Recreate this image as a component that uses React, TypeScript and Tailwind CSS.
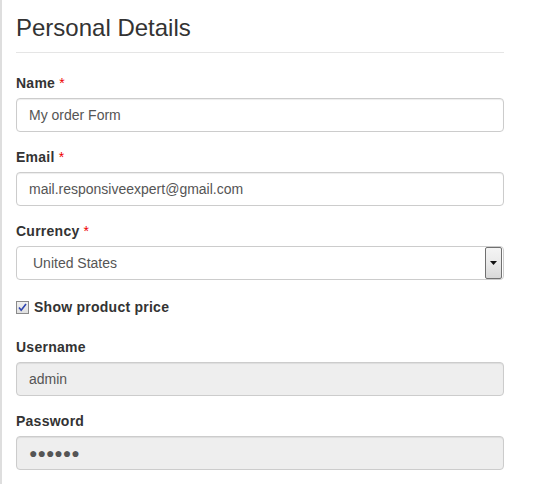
import { ReactNode } from "react";

function Label({ children, required }: { children: ReactNode; required?: boolean }) {
  return (
    <label className="block mb-[5px] text-[14px] leading-[20px] font-bold tracking-[0.25px] text-[#333]">
      {children}
      {required && <span className="text-[#e00] font-normal"> *</span>}
    </label>
  );
}

function TextBox({ value, disabled }: { value: string; disabled?: boolean }) {
  return (
    <div
      className={`h-[34px] flex items-center px-[12px] border border-[#ccc] rounded-[4px] shadow-[inset_0_1px_1px_rgba(0,0,0,0.075)] text-[14px] text-[#555] ${
        disabled ? "bg-[#eee]" : "bg-white"
      }`}
    >
      {value}
    </div>
  );
}

export default function App() {
  return (
    <div
      className="w-[550px] h-[484px] bg-white border-l-2 border-[#dedede] overflow-hidden"
      style={{ fontFamily: '"Liberation Sans", Arial, sans-serif' }}
    >
      <div className="w-[488px] ml-[14px]">
        {/* Legend */}
        <div className="pt-[13px] pb-[9px] mb-[20px] border-b border-[#e5e5e5] text-[24px] leading-[30px] text-[#333]">
          Personal Details
        </div>

        <div className="mb-[15px]">
          <Label required>Name</Label>
          <TextBox value="My order Form" />
        </div>

        <div className="mb-[15px]">
          <Label required>Email</Label>
          <TextBox value="mail.responsiveexpert@gmail.com" />
        </div>

        <div className="mb-[15px]">
          <Label required>Currency</Label>
          <div className="h-[34px] flex items-center border border-[#ccc] rounded-[4px] bg-white text-[14px] text-[#555]">
            <span className="flex-1 pl-[16px]">United States</span>
            <div className="w-[17px] h-[32px] mr-[1px] border border-[#707070] rounded-[2px] bg-gradient-to-b from-[#f4f4f4] via-[#eaeaea] to-[#d8d8d8] flex items-center justify-center">
              <svg width="7" height="4" viewBox="0 0 7 4">
                <path d="M0 0h7L3.5 4z" fill="#111" />
              </svg>
            </div>
          </div>
        </div>

        <div className="h-[24px] mb-[18px] flex items-center gap-[5px]">
          <div className="w-[13px] h-[13px] border border-[#8a8a8a] bg-gradient-to-b from-[#f0f0f0] to-[#e0e0e0] flex items-center justify-center">
            <svg width="9" height="9" viewBox="0 0 9 9">
              <path d="M1 4.5l2.2 2.8L8 1" stroke="#2f45b0" strokeWidth="1.6" fill="none" />
            </svg>
          </div>
          <span className="text-[14px] font-bold tracking-[0.25px] text-[#333]">Show product price</span>
        </div>

        <div className="mb-[15px]">
          <Label>Username</Label>
          <TextBox value="admin" disabled />
        </div>

        <div className="mb-[15px]">
          <Label>Password</Label>
          <TextBox value="●●●●●●" disabled />
        </div>
      </div>
    </div>
  );
}
